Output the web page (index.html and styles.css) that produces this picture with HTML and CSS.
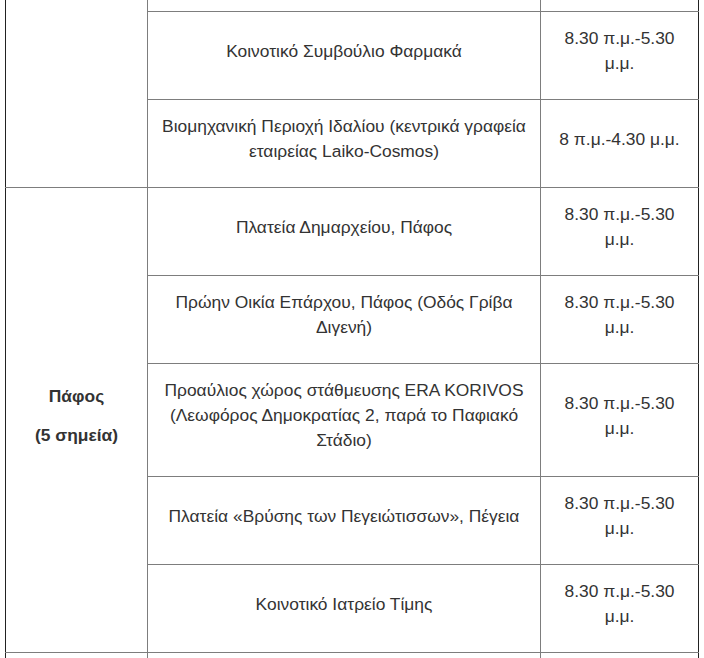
FILE: index.html
```html
<!DOCTYPE html>
<html lang="el">
<head>
<meta charset="utf-8">
<title>Σημεία</title>
<link rel="stylesheet" href="styles.css">
</head>
<body>
<div class="wrap">
<table class="points">
  <colgroup>
    <col class="col-area">
    <col class="col-place">
    <col class="col-time">
  </colgroup>
  <tbody>
    <tr class="cut-top">
      <td class="area" rowspan="3"></td>
      <td></td>
      <td class="time"></td>
    </tr>
    <tr>
      <td>Κοινοτικό Συμβούλιο Φαρμακά</td>
      <td class="time">8.30 π.μ.-5.30 μ.μ.</td>
    </tr>
    <tr>
      <td>Βιομηχανική Περιοχή Ιδαλίου (κεντρικά γραφεία εταιρείας Laiko-Cosmos)</td>
      <td class="time">8 π.μ.-4.30 μ.μ.</td>
    </tr>
    <tr>
      <td class="area" rowspan="5">
        <p class="area-name">Πάφος</p>
        <p class="area-count">(5 σημεία)</p>
      </td>
      <td>Πλατεία Δημαρχείου, Πάφος</td>
      <td class="time">8.30 π.μ.-5.30 μ.μ.</td>
    </tr>
    <tr>
      <td>Πρώην Οικία Επάρχου, Πάφος (Οδός Γρίβα Διγενή)</td>
      <td class="time">8.30 π.μ.-5.30 μ.μ.</td>
    </tr>
    <tr>
      <td>Προαύλιος χώρος στάθμευσης ERA KORIVOS (Λεωφόρος Δημοκρατίας 2, παρά το Παφιακό Στάδιο)</td>
      <td class="time">8.30 π.μ.-5.30 μ.μ.</td>
    </tr>
    <tr>
      <td>Πλατεία «Βρύσης των Πεγειώτισσων», Πέγεια</td>
      <td class="time">8.30 π.μ.-5.30 μ.μ.</td>
    </tr>
    <tr>
      <td>Κοινοτικό Ιατρείο Τίμης</td>
      <td class="time">8.30 π.μ.-5.30 μ.μ.</td>
    </tr>
    <tr class="cut-bottom">
      <td class="area"></td>
      <td></td>
      <td class="time"></td>
    </tr>
  </tbody>
</table>
</div>
</body>
</html>
```

FILE: styles.css
```css
html, body {
  margin: 0;
  padding: 0;
  background: #ffffff;
}

.wrap {
  padding-left: 5px;
}

.points {
  width: 693px;
  border-collapse: collapse;
  table-layout: fixed;
  font-family: "Liberation Sans", Arial, sans-serif;
  font-size: 17.4px;
  line-height: 25px;
  color: #333333;
}

.col-area { width: 142px; }
.col-place { width: 393px; }
.col-time { width: 158px; }

.points td {
  border: 1px solid #7d7d7d;
  padding: 14px 10px 23px;
  text-align: center;
  vertical-align: middle;
}

.points td.area {
  border-left-color: #222222;
  font-weight: bold;
}

.points td.time {
  border-right-color: #222222;
}

.points tr.cut-top td {
  border-top: none;
  padding: 0;
  height: 11px;
}

.points tr.cut-bottom td {
  height: 100px;
}

.area-name,
.area-count {
  margin: 0;
}

.area-name {
  margin-bottom: 14px;
}
```
